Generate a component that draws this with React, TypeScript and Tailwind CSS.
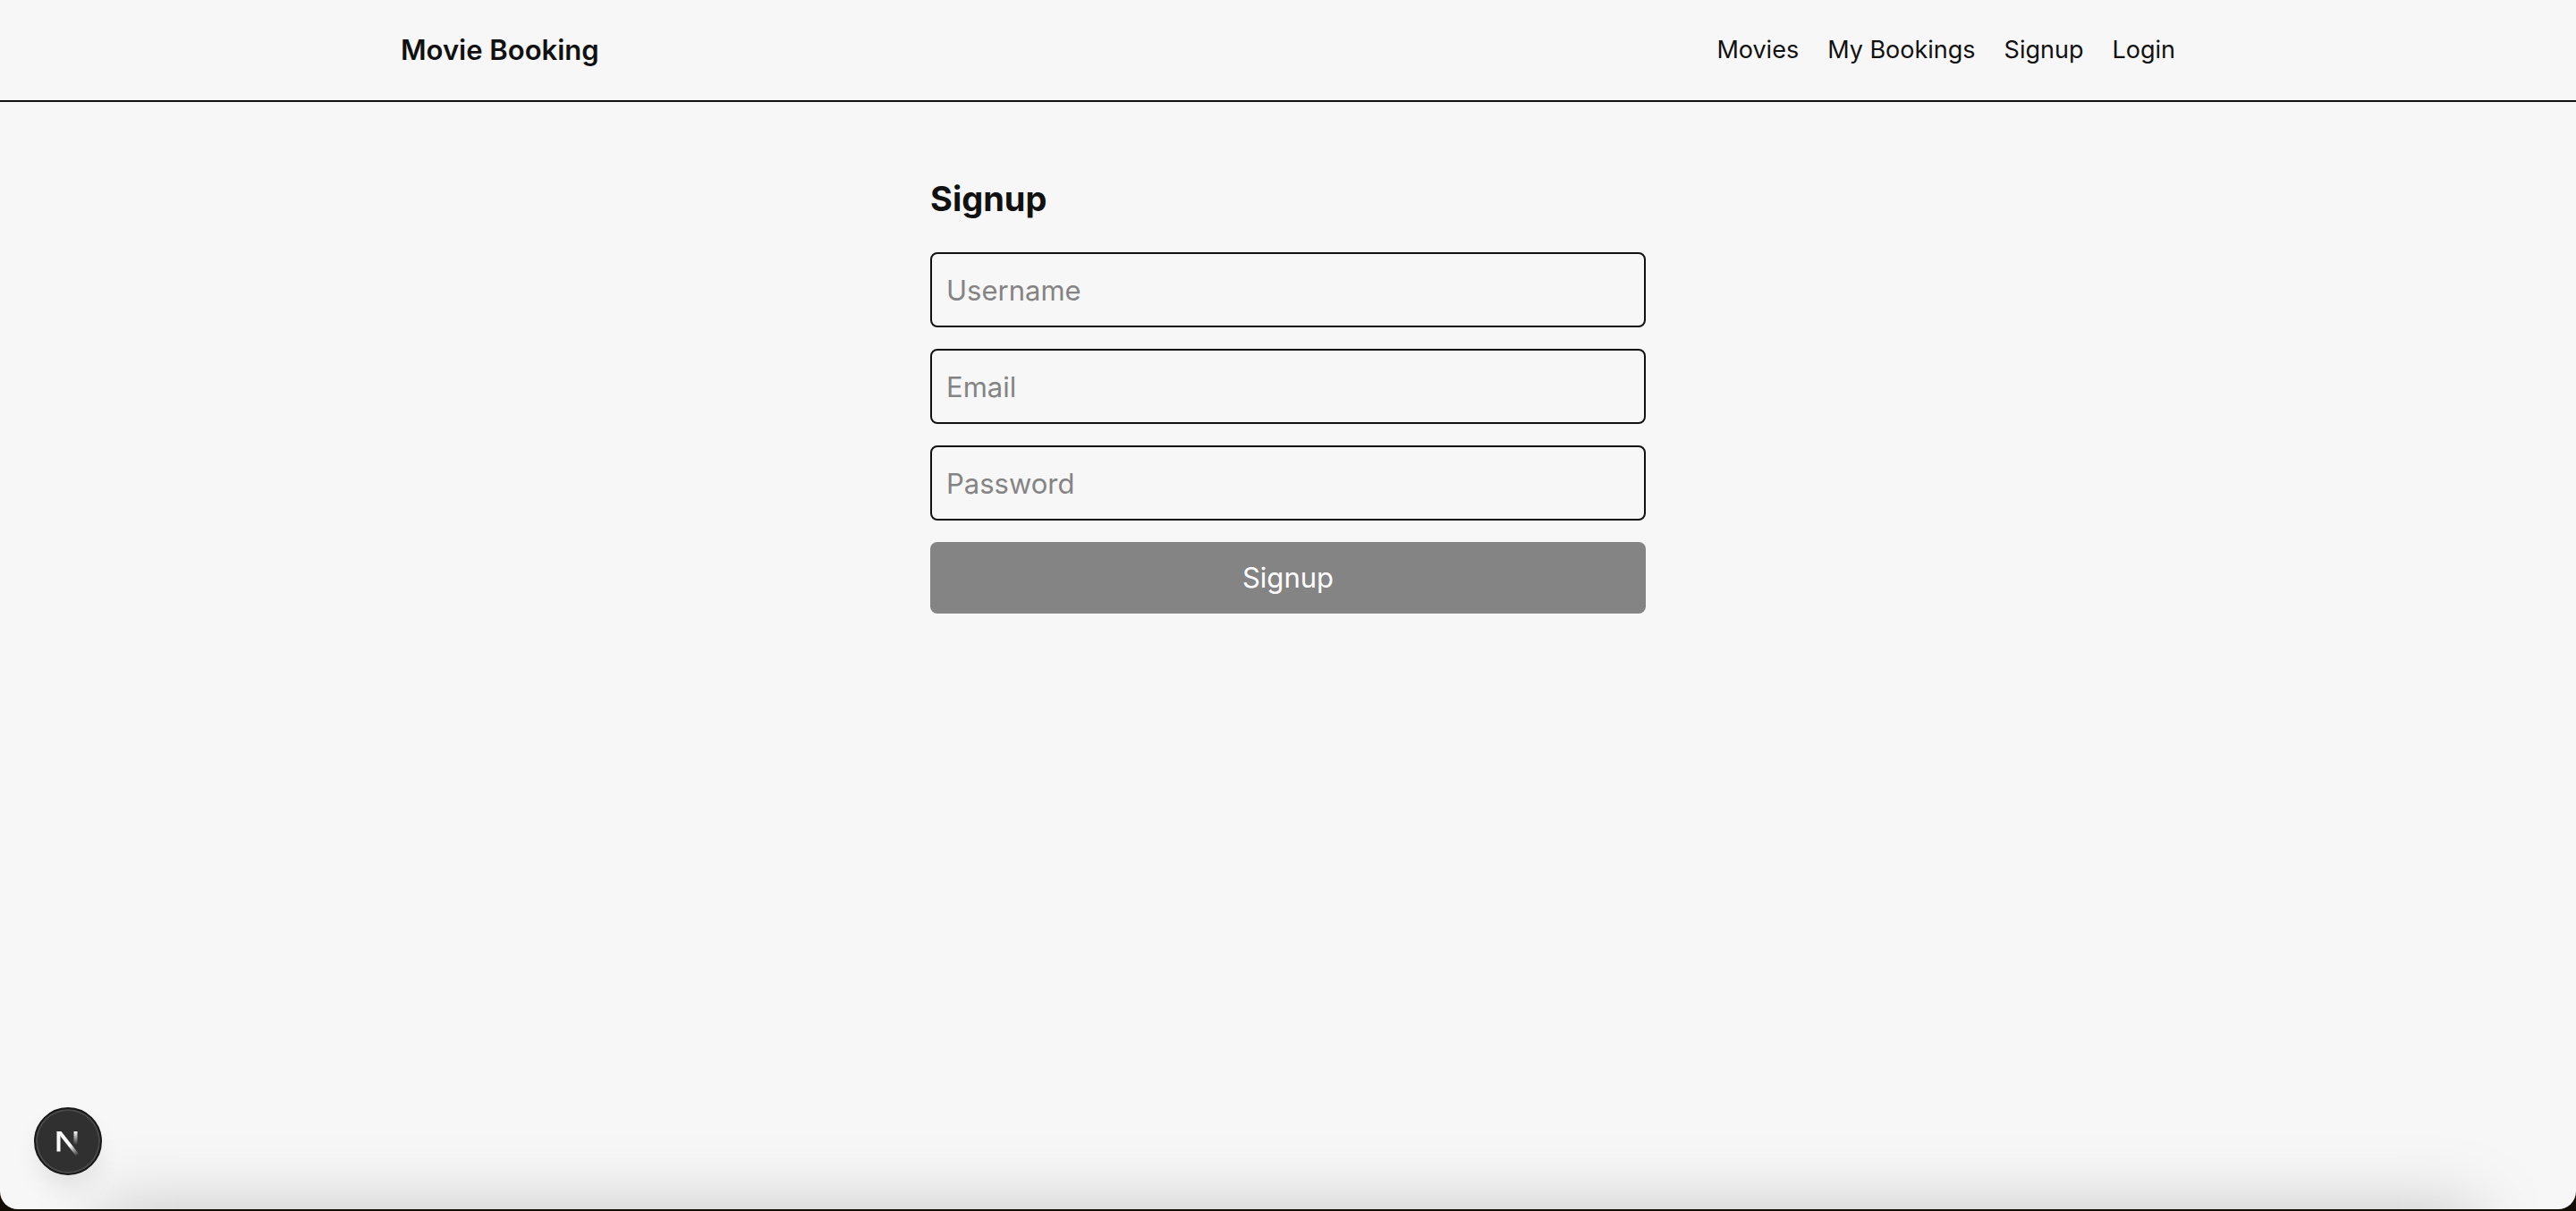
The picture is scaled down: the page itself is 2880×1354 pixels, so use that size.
import { useState } from "react";

const links = ["Movies", "My Bookings", "Signup", "Login"];
const fields = [
  { name: "username", label: "Username", type: "text" },
  { name: "email", label: "Email", type: "email" },
  { name: "password", label: "Password", type: "password" },
];

function Header() {
  return (
    <header className="border-b-2 border-[#111111]">
      <div className="mx-auto flex h-28 max-w-[2048px] items-center justify-between px-8">
        <a href="#home" className="text-[31px] font-semibold">
          Movie Booking
        </a>
        <nav className="flex gap-8 text-[27px]">
          {links.map((link) => (
            <a key={link} href={"#" + link.toLowerCase().replace(" ", "-")}>
              {link}
            </a>
          ))}
        </nav>
      </div>
    </header>
  );
}

function SignupForm() {
  const [values, setValues] = useState<Record<string, string>>({});
  const complete = fields.every((f) => values[f.name]);
  return (
    <form
      className="mx-auto flex max-w-[800px] flex-col gap-6 pt-20"
      onSubmit={(e) => e.preventDefault()}
    >
      <h1 className="mb-2 text-[38px] leading-[56px] font-bold">Signup</h1>
      {fields.map((f) => (
        <input
          key={f.name}
          name={f.name}
          type={f.type}
          aria-label={f.label}
          placeholder={f.label}
          value={values[f.name] ?? ""}
          onChange={(e) => setValues({ ...values, [f.name]: e.target.value })}
          className="h-[84px] rounded-lg border-2 border-[#111111] bg-transparent px-4 text-[31px] placeholder:text-[#848484]"
        />
      ))}
      <button
        type="submit"
        disabled={!complete}
        className="h-20 rounded-lg bg-[#111111] px-4 text-[31px] text-white disabled:bg-[#848484]"
      >
        Signup
      </button>
    </form>
  );
}

function DevToolsButton() {
  return (
    <button
      type="button"
      aria-label="Open Next.js Dev Tools"
      className="absolute bottom-[38px] left-[38px] flex size-[76px] items-center justify-center rounded-full border-2 border-[#171717] bg-[#303030] shadow-[inset_0_0_0_2px_#484848,0_16px_32px_-8px_rgba(0,0,0,0.12)]"
    >
      <svg viewBox="0 0 76 76" className="size-[76px] shrink-0" fill="none">
        <defs>
          <linearGradient id="stem" x1="46.5" y1="27" x2="46.5" y2="42" gradientUnits="userSpaceOnUse">
            <stop stopColor="#fff" />
            <stop offset="1" stopColor="#fff" stopOpacity="0" />
          </linearGradient>
          <linearGradient id="diagonal" x1="40" y1="43" x2="49" y2="54" gradientUnits="userSpaceOnUse">
            <stop stopColor="#fff" />
            <stop offset="1" stopColor="#fff" stopOpacity="0" />
          </linearGradient>
        </defs>
        <path d="M25.5 27h4v22.5h-4z" fill="#fff" />
        <path d="M25.5 27h5L50 52l-3 2.5L26.5 28.500z" fill="url(#diagonal)" />
        <path d="M44.5 27h4v15h-4z" fill="url(#stem)" />
      </svg>
    </button>
  );
}

export default function App() {
  return (
    <div className="bg-[#120d04] pb-0.5 font-['Inter',sans-serif] text-[#111111]">
      <div className="relative flex min-h-[calc(100vh-2px)] flex-col overflow-hidden rounded-b-[20px] bg-[#f7f7f7]">
        <div
          aria-hidden="true"
          className="absolute inset-x-28 -bottom-28 h-28 bg-black/20 blur-[40px]"
        />
        <Header />
        <main>
          <SignupForm />
        </main>
        <DevToolsButton />
      </div>
    </div>
  );
}
